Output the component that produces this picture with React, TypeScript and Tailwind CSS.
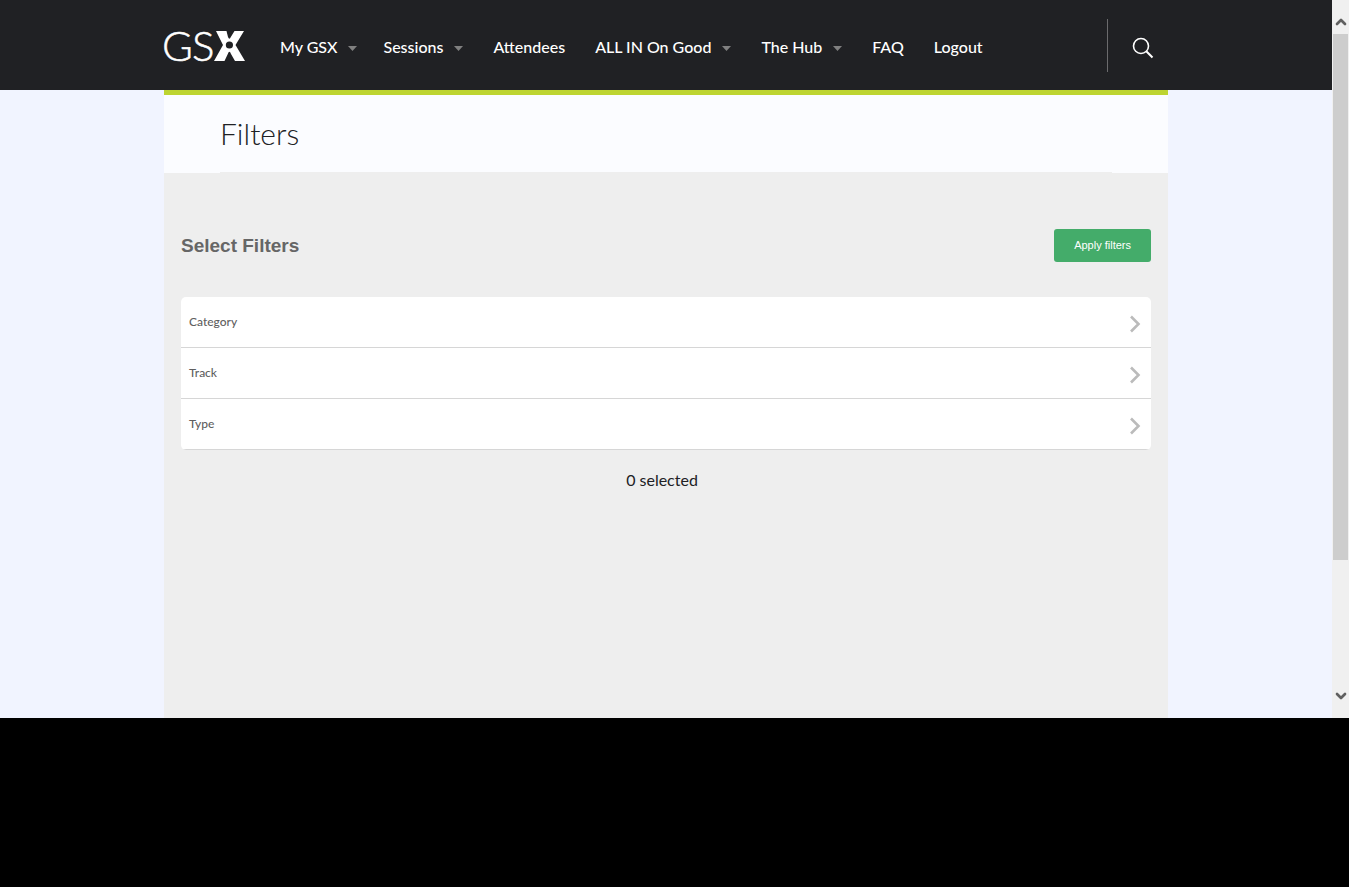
import { ChevronDown, ChevronUp } from "lucide-react";

const navItems = [
  { label: "My GSX", menu: true },
  { label: "Sessions", menu: true },
  { label: "Attendees", menu: false },
  { label: "ALL IN On Good", menu: true },
  { label: "The Hub", menu: true },
  { label: "FAQ", menu: false },
  { label: "Logout", menu: false },
];

const filters = ["Category", "Track", "Type"];

function Logo() {
  return (
    <svg width="88" height="56" viewBox="-4 -12 88 56" className="block" role="img" aria-label="GSX">
      <g fill="#fff" stroke="#fff" strokeWidth="0.5" fontFamily="Lato, sans-serif" fontWeight="300" fontSize="42">
        <text x="-2" y="31">G</text>
        <text x="28" y="31">S</text>
      </g>
      <path
        d="M52 1H62.500L64 7Q65.400 10.500 66.800 7L70.500 1H80L71.500 15L81 31H71L67 24Q65.400 19.500 63.800 24L60.500 31H50L59 15Z"
        fill="#fff"
      />
      <circle cx="65.400" cy="15" r="3.600" fill="#202124" />
    </svg>
  );
}

function Header() {
  return (
    <header className="bg-[#202124]">
      <div className="mx-auto flex h-[90px] max-w-[1004px] items-center">
        <a href="#home" className="mt-0.5 mr-8 -ml-1 shrink-0">
          <Logo />
        </a>
        <nav className="grow pt-1">
          <ul className="flex items-center gap-[30px]">
            {navItems.map(({ label, menu }) => (
              <li key={label} className="first:-mr-1">
                <a
                  href="#menu"
                  className="flex items-center gap-[11px] text-base leading-6 font-medium whitespace-nowrap text-white"
                >
                  {label}
                  {menu && (
                    <svg width="9" height="5" viewBox="0 0 9 5" fill="#808080" className="mt-0.5" aria-hidden="true">
                      <path d="M0 0H9L4.500 5Z" />
                    </svg>
                  )}
                </a>
              </li>
            ))}
          </ul>
        </nav>
        <div className="flex h-[53px] items-center border-l border-[#6b6b6d] pt-1.5 pr-[14px] pl-6">
          <button type="button" aria-label="Search" className="block">
            <svg width="22" height="22" viewBox="0 0 22 22" fill="none" stroke="#fff" strokeWidth="1.600" aria-hidden="true">
              <circle cx="9" cy="9" r="7.500" />
              <path d="M14.300 14.300L20.500 20.500" strokeWidth="2" />
            </svg>
          </button>
        </div>
      </div>
    </header>
  );
}

function FilterRow({ label }: { label: string }) {
  return (
    <li className="border-b border-[#d6d6d6]">
      <button type="button" className="flex h-[50px] w-full items-center justify-between pr-[10px] pl-2 text-left text-xs text-[#5f5f5f]">
        <span className="font-medium">{label}</span>
        <svg width="12" height="18" viewBox="0 0 12 18" fill="none" stroke="#bbb" strokeWidth="2.600" className="mt-1" aria-hidden="true">
          <path d="M2 1.500L9.500 9L2 16.500" />
        </svg>
      </button>
    </li>
  );
}

export default function App() {
  return (
    <div className="min-h-screen bg-black font-[Lato,sans-serif]">
      <div className="flex bg-[#f1f4ff]">
        <div className="min-w-0 grow">
          <Header />
          <main className="mx-auto max-w-[1004px] border-t-[5px] border-[#bdd431] bg-[#eee]">
            <div className="bg-[#fbfcff] px-14">
              <h1 className="border-b border-[#eee] pt-[18px] pb-[19px] text-[30px] leading-10 font-light text-[#202124]">
                Filters
              </h1>
            </div>
            <section className="px-[17px] pt-14 pb-[226px]">
              <div className="flex items-center justify-between">
                <h2 className="font-['Liberation_Sans',Arial,sans-serif] text-[19px] leading-6 font-bold text-[#666]">
                  Select Filters
                </h2>
                <button
                  type="button"
                  className="h-[33px] rounded-[3px] bg-[#44ac6a] px-5 font-['Liberation_Sans',Arial,sans-serif] text-[11px] text-white"
                >
                  Apply filters
                </button>
              </div>
              <ul className="mt-[35px] overflow-hidden rounded-[5px] bg-white">
                {filters.map((label) => (
                  <FilterRow key={label} label={label} />
                ))}
              </ul>
              <p className="mt-[18px] pr-2 text-center text-base leading-6 text-[#202124]">0 selected</p>
            </section>
          </main>
        </div>
        <div className="flex w-[17px] shrink-0 flex-col items-center bg-[#f0f0f0] pt-[14px] pb-[14px]">
          <ChevronUp size={16} strokeWidth={4} color="#606060" />
          <div className="mt-1 w-[15px] grow bg-[#cdcdcd]" />
          <div className="h-32" />
          <ChevronDown size={16} strokeWidth={4} color="#606060" />
        </div>
      </div>
    </div>
  );
}
